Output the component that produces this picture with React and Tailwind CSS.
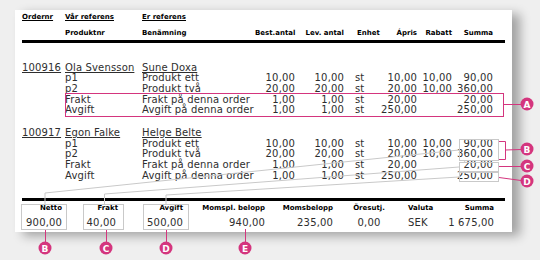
import React from 'react';

const PINK = '#d4357e';
const GRAY = '#c9c9c9';

const cols = 'grid grid-cols-[43px_77px_113px_40px_49px_31px_42px_35px_41px]';
const footCols = 'grid grid-cols-[40px_56px_65px_82px_68px_72px_42px_47px]';

const orders = [
  {
    nr: '100916',
    our: 'Ola Svensson',
    their: 'Sune Doxa',
    rows: [
      ['p1', 'Produkt ett', '10,00', '10,00', 'st', '10,00', '10,00', '90,00'],
      ['p2', 'Produkt två', '20,00', '20,00', 'st', '20,00', '10,00', '360,00'],
      ['Frakt', 'Frakt på denna order', '1,00', '1,00', 'st', '20,00', '', '20,00'],
      ['Avgift', 'Avgift på denna order', '1,00', '1,00', 'st', '250,00', '', '250,00'],
    ],
  },
  {
    nr: '100917',
    our: 'Egon Falke',
    their: 'Helge Belte',
    rows: [
      ['p1', 'Produkt ett', '10,00', '10,00', 'st', '10,00', '10,00', '90,00'],
      ['p2', 'Produkt två', '20,00', '20,00', 'st', '20,00', '10,00', '360,00'],
      ['Frakt', 'Frakt på denna order', '1,00', '1,00', 'st', '20,00', '', '20,00'],
      ['Avgift', 'Avgift på denna order', '1,00', '1,00', 'st', '250,00', '', '250,00'],
    ],
  },
];

function OrderGroup({ order, className }) {
  return (
    <div className={className}>
      <div className={`${cols} h-[10.7px]`}>
        <span className="underline">{order.nr}</span>
        <span className="underline whitespace-nowrap">{order.our}</span>
        <span className="underline">{order.their}</span>
      </div>
      {order.rows.map((r, i) => (
        <div key={i} className={`${cols} h-[10.7px]`}>
          <span />
          <span>{r[0]}</span>
          <span className="whitespace-nowrap">{r[1]}</span>
          <span className="text-right">{r[2]}</span>
          <span className="text-right">{r[3]}</span>
          <span className="pl-[11px]">{r[4]}</span>
          <span className="text-right">{r[5]}</span>
          <span className="text-right">{r[6]}</span>
          <span className="text-right">{r[7]}</span>
        </div>
      ))}
    </div>
  );
}

function Callout({ x, y, letter }) {
  return (
    <g>
      <circle cx={x} cy={y} r="6.5" fill={PINK} />
      <text x={x} y={y + 0.5} fill="#fff" fontSize="9" fontWeight="bold" fontFamily="DejaVu Sans, sans-serif" textAnchor="middle" dominantBaseline="central">
        {letter}
      </text>
    </g>
  );
}

function Annotations() {
  return (
    <svg className="absolute inset-0 pointer-events-none" width="540" height="260" viewBox="0 0 540 260">
      {/* gray connector lines */}
      <polyline points="45,204 45,193 459,150" fill="none" stroke={GRAY} strokeWidth="1" />
      <polyline points="104.5,204 104.5,194 459,167" fill="none" stroke={GRAY} strokeWidth="1" />
      <polyline points="166,204 166,195 459,177" fill="none" stroke={GRAY} strokeWidth="1" />

      {/* gray boxes in table */}
      <rect x="459.5" y="139.5" width="39" height="21" fill="none" stroke={GRAY} />
      <rect x="459.5" y="162.5" width="39" height="9" fill="none" stroke={GRAY} />
      <rect x="459.5" y="172.5" width="39" height="9" fill="none" stroke={GRAY} />

      {/* footer boxes */}
      <rect x="21.5" y="204.5" width="45" height="25" fill="none" stroke={GRAY} />
      <rect x="83.5" y="204.5" width="40" height="25" fill="none" stroke={GRAY} />
      <rect x="143.5" y="204.5" width="45" height="25" fill="none" stroke={GRAY} />

      {/* A */}
      <rect x="65.5" y="93.5" width="438" height="23" fill="none" stroke={PINK} />
      <line x1="503.5" y1="104.5" x2="521" y2="104.5" stroke={PINK} />
      <Callout x={527} y={104} letter="A" />

      {/* B */}
      <polyline points="499,141.5 505.5,141.5 505.5,159.5 499,159.5" fill="none" stroke={PINK} />
      <line x1="505.5" y1="150" x2="521" y2="149.5" stroke={PINK} />
      <Callout x={527} y={149} letter="B" />

      {/* C */}
      <line x1="499" y1="166.5" x2="521" y2="166.5" stroke={PINK} />
      <Callout x={527} y={166} letter="C" />

      {/* D */}
      <line x1="499" y1="177.5" x2="521" y2="180.5" stroke={PINK} />
      <Callout x={527} y={181} letter="D" />

      {/* bottom callouts */}
      <line x1="45.5" y1="230" x2="45.5" y2="242" stroke={PINK} />
      <line x1="106.5" y1="230" x2="106.5" y2="242" stroke={PINK} />
      <line x1="166.5" y1="230" x2="166.5" y2="242" stroke={PINK} />
      <line x1="245.5" y1="229" x2="245.5" y2="242" stroke={PINK} />
      <Callout x={45} y={248} letter="B" />
      <Callout x={106} y={248} letter="C" />
      <Callout x={166} y={248} letter="D" />
      <Callout x={245} y={248} letter="E" />
    </svg>
  );
}

export default function App() {
  return (
    <div className="relative w-[540px] h-[260px] overflow-hidden bg-[#efefef] font-['DejaVu_Sans',sans-serif]">
      <div className="ml-[15px] mt-[10px] w-[497px] h-[222px] bg-white shadow-[8px_4px_10px_rgba(0,0,0,0.32)] pl-[7px] pr-[7px] pt-[3px]">
        {/* Header */}
        <div className="text-[7px] font-bold text-black">
          <div className={`${cols} h-[9px] leading-[9px]`}>
            <span className="underline">Ordernr</span>
            <span className="underline">Vår referens</span>
            <span className="underline">Er referens</span>
          </div>
          <div className={`${cols} h-[9px] leading-[9px] mt-[6.5px]`}>
            <span />
            <span>Produktnr</span>
            <span>Benämning</span>
            <span className="text-right whitespace-nowrap">Best.antal</span>
            <span className="text-right whitespace-nowrap">Lev. antal</span>
            <span className="pl-[13px]">Enhet</span>
            <span className="text-right">Ápris</span>
            <span className="text-right">Rabatt</span>
            <span className="text-right">Summa</span>
          </div>
        </div>
        <div className="mt-[2.5px] h-[3px] bg-black" />

        {/* Body */}
        <div className="text-[10px] leading-[10.7px] tracking-[0.15px] text-[#2e2e2e]">
          <OrderGroup order={orders[0]} className="mt-[19.6px]" />
          <OrderGroup order={orders[1]} className="mt-[11.8px]" />
        </div>

        <div className="mt-[16.5px] h-[3px] bg-black" />

        {/* Footer */}
        <div className={`${footCols} mt-[3.5px] h-[9px] leading-[9px] text-[7px] font-bold text-black`}>
          <span className="text-right">Netto</span>
          <span className="text-right">Frakt</span>
          <span className="text-right">Avgift</span>
          <span className="text-right whitespace-nowrap">Momspl. belopp</span>
          <span className="text-right">Momsbelopp</span>
          <span className="text-center">Öresutj.</span>
          <span className="pl-[3px]">Valuta</span>
          <span className="text-right">Summa</span>
        </div>
        <div className={`${footCols} mt-[4px] h-[11px] leading-[11px] text-[10px] tracking-[0.15px] text-[#2e2e2e]`}>
          <span className="text-right">900,00</span>
          <span className="text-right pr-[2px]">40,00</span>
          <span className="text-right">500,00</span>
          <span className="text-right">940,00</span>
          <span className="text-right">235,00</span>
          <span className="text-center">0,00</span>
          <span className="pl-[3px]">SEK</span>
          <span className="text-right whitespace-nowrap">1 675,00</span>
        </div>
      </div>
      <Annotations />
    </div>
  );
}
